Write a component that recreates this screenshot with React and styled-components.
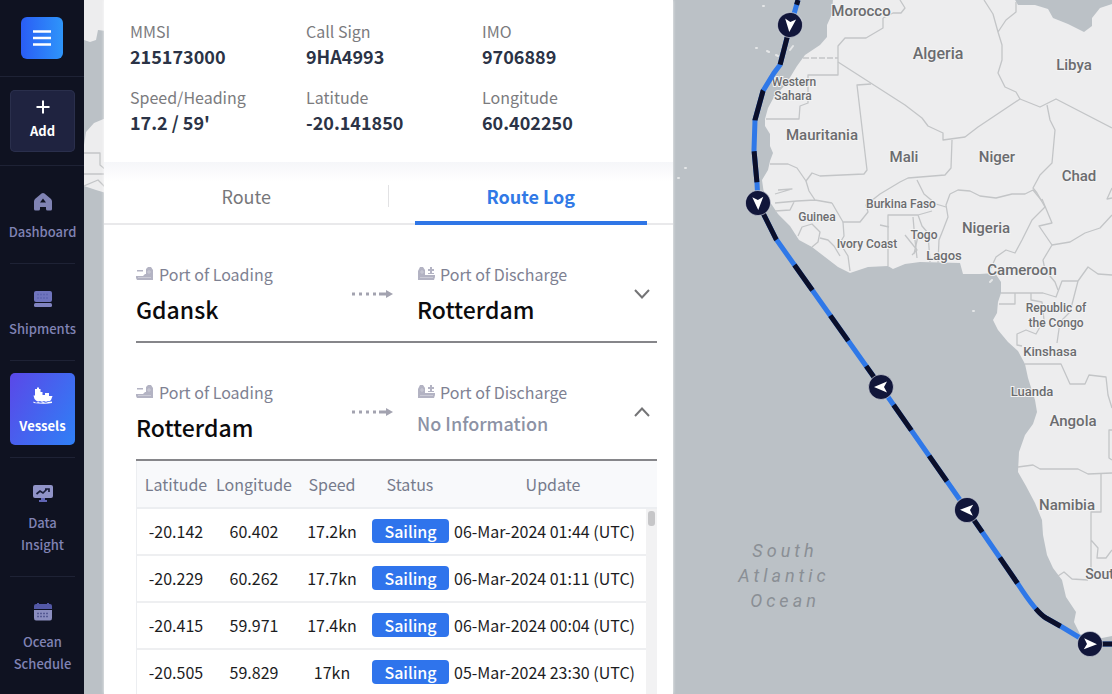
import React from 'react';
import styled, { createGlobalStyle } from 'styled-components';

const GlobalStyle = createGlobalStyle`
  *, *::before, *::after { box-sizing: border-box; }
  body {
    margin: 0;
    background: #bbc1c6;
    font-family: "Noto Sans CJK KR", "Noto Sans", sans-serif;
  }
  button { font: inherit; border: 0; cursor: pointer; }
  dl, dd, p { margin: 0; }
`;

/* ---------- shell ---------- */

const Shell = styled.div`
  display: flex;
  height: 100vh;
  overflow: hidden;
`;

const Sidebar = styled.nav`
  flex: 0 0 84px;
  background: #0f1221;
  overflow: hidden;
`;

const Stage = styled.main`
  position: relative;
  flex: 1;
  min-width: 0;
  padding-left: 20px;
`;

/* ---------- sidebar ---------- */

const SideSection = styled.div`
  display: flex;
  justify-content: center;
  padding: ${(p) => p.$pad};
  border-bottom: 1px solid #1e2235;
`;

const MenuButton = styled.button`
  display: grid;
  place-items: center;
  width: 42px;
  height: 42px;
  padding: 0;
  border-radius: 6px;
  color: #fff;
  background: linear-gradient(90deg, #2a5df5, #2e95fa);
`;

const AddButton = styled.button`
  display: flex;
  flex-direction: column;
  align-items: center;
  justify-content: center;
  gap: 6px;
  width: 100%;
  height: 62px;
  padding: 0;
  border-radius: 5px;
  color: #fff;
  background: #1f2340;
  box-shadow: inset 0 0 0 1px #2a2f4c;
  font-size: 13px;
  font-weight: 700;
  line-height: 22px;
`;

const NavList = styled.ul`
  margin: 0;
  padding: 1px 9px 0 10px;
  list-style: none;
`;

const NavItem = styled.li`
  padding: 12px 0;
  & + & { border-top: 1px solid #1e2235; }
`;

const NavLink = styled.a`
  display: flex;
  flex-direction: column;
  align-items: center;
  gap: 9px;
  padding: 13px 0 8px;
  border-radius: 5px;
  color: ${(p) => (p.$active ? '#fff' : '#8083b4')};
  background: ${(p) => (p.$active ? 'linear-gradient(120deg, #5a48e8, #2f80f6)' : 'none')};
  font-size: 13px;
  font-weight: ${(p) => (p.$active ? 700 : 500)};
  line-height: 22px;
  text-align: center;
  text-decoration: none;
`;

/* ---------- vessel panel ---------- */

const Panel = styled.section`
  position: relative;
  width: 569px;
  max-width: 100%;
  height: 100%;
  overflow: hidden;
  background: #fff;
  box-shadow: 0 0 3px rgba(255, 255, 255, 0.8);
`;

const Facts = styled.dl`
  display: grid;
  grid-template-columns: repeat(3, 1fr);
  row-gap: 16px;
  padding: 19px 15px 27px 26px;
`;

const FactLabel = styled.dt`
  color: #7b7b7e;
  font-size: 16px;
  line-height: 24px;
`;

const FactValue = styled.dd`
  color: #2b3346;
  font-size: 18px;
  font-weight: 700;
  line-height: 26px;
`;

const Tabs = styled.div`
  display: flex;
  height: 63px;
  border-bottom: 2px solid #e9e9eb;
  background: linear-gradient(#f5f6f9, #fff 20px);
`;

const Tab = styled.button`
  position: relative;
  flex: 1;
  padding: 7px 0 0;
  background: none;
  color: ${(p) => (p.$active ? '#3179e6' : '#77777a')};
  font-size: 18px;
  font-weight: ${(p) => (p.$active ? 700 : 400)};
  line-height: 28px;
  &::after {
    content: "";
    position: absolute;
    ${(p) => (p.$active
      ? 'left: 26px; right: 26px; bottom: -2px; height: 4px; background: #2f76e6;'
      : 'right: 0; top: 23px; width: 1px; height: 22px; background: #e2e2e4;')}
  }
`;

const Voyages = styled.div`
  padding: 0 16px 0 32px;
`;

const Voyage = styled.article`
  display: grid;
  grid-template-columns: 216px 65px 1fr 16px;
  padding: 36px 7px 14px 0;
  border-bottom: 2px solid #86868a;
`;

const Port = styled.div`
  display: grid;
  align-content: start;
  row-gap: 4px;
`;

const PortLabel = styled.p`
  display: flex;
  align-items: center;
  gap: 5px;
  color: #7e8192;
  font-size: 16px;
  line-height: 26px;
`;

const PortName = styled.p`
  color: ${(p) => (p.$empty ? '#8c92a5' : '#0b0b0d')};
  font-size: ${(p) => (p.$empty ? 18 : 23)}px;
  font-weight: 500;
  line-height: ${(p) => (p.$empty ? 28 : 36)}px;
`;

const Middle = styled.span`
  display: flex;
  align-items: center;
`;

const Toggle = styled.button`
  display: flex;
  align-items: center;
  padding: 0;
  background: none;
  color: #747476;
`;

const LogBox = styled.div`
  position: relative;
  border-left: 1px solid #eceef1;
`;

const Log = styled.table`
  width: 100%;
  table-layout: fixed;
  border-collapse: collapse;
  font-size: 16px;
  line-height: 24px;
`;

const Head = styled.th`
  width: ${(p) => p.$width || 'auto'};
  height: 47px;
  padding: 0;
  border-bottom: 2px solid #eceef1;
  background: #f8f9fb;
  color: #767b8c;
  font-size: 16px;
  font-weight: 400;
  text-align: center;
`;

const Cell = styled.td`
  height: 47px;
  padding: ${(p) => (p.$date ? '0 0 2px 5px' : '0 0 2px')};
  border-bottom: 2px solid #eeeff1;
  color: #1c1c1e;
  text-align: ${(p) => (p.$date ? 'left' : 'center')};
  white-space: nowrap;
`;

const Badge = styled.span`
  display: block;
  height: 24px;
  margin-left: 1px;
  border-radius: 4px;
  background: #2f74ec;
  color: #fff;
  font-size: 16px;
  font-weight: 500;
  line-height: 24px;
`;

const ScrollTrack = styled.div`
  position: absolute;
  top: 48px;
  right: 0;
  bottom: 0;
  width: 11px;
  padding: 2px 2px 0;
  background: #f2f2f3;
  &::before {
    content: "";
    display: block;
    height: 15px;
    border-radius: 3px;
    background: #c6c6c8;
  }
`;

/* ---------- map ---------- */

const MapCanvas = styled.svg`
  position: absolute;
  inset: 0;
  width: 100%;
  height: 100%;
`;

const Land = styled.path`
  fill: #ededee;
`;

const Border = styled.path`
  fill: none;
  stroke: #c3c5c7;
  stroke-width: 1.3;
  stroke-linejoin: round;
`;

const Place = styled.text`
  fill: #6b6c6f;
  stroke: #f3f3f3;
  stroke-width: 2;
  paint-order: stroke;
  font-family: Roboto, sans-serif;
  font-size: ${(p) => p.$size}px;
  font-weight: 500;
  text-anchor: middle;
`;

const SeaName = styled.text`
  fill: #8a8f95;
  font-family: Roboto, sans-serif;
  font-size: 18px;
  font-style: italic;
  letter-spacing: 4px;
  text-anchor: middle;
`;

const Track = styled.path`
  fill: none;
  stroke: ${(p) => p.$color};
  stroke-width: 5;
`;

const LEGS = [
  { d: 'M798 0 L794 14 L790 25 L787 38 L780 65 L774 73 L763 91 L755 120 L754 150 L757 183 L758 203 L776 239 L881 387', offset: 26 },
  { d: 'M881 387 L967 510 L1018 584 Q1036 612 1046 618 L1062 627 L1090 644 L1112 644', offset: 40 },
];

const STOPS = [
  [790, 25, 186],
  [758, 203, 178],
  [881, 387, 270],
  [967, 510, 272],
  [1090, 644, 92],
];

const PLACES = [
  ['Morocco', 861, 16, 15],
  ['Algeria', 938, 59, 16],
  ['Libya', 1074, 70, 15],
  ['Western', 794, 86, 12],
  ['Sahara', 793, 100, 12],
  ['Mauritania', 822, 140, 15],
  ['Mali', 904, 162, 15],
  ['Niger', 997, 162, 15],
  ['Chad', 1079, 181, 15],
  ['Burkina Faso', 901, 208, 12],
  ['Guinea', 817, 221, 12],
  ['Ivory Coast', 867, 248, 12],
  ['Togo', 924, 239, 12],
  ['Nigeria', 986, 233, 15],
  ['Lagos', 944, 260, 13],
  ['Cameroon', 1022, 275, 15],
  ['Republic of', 1056, 312, 12],
  ['the Congo', 1056, 327, 12],
  ['Kinshasa', 1050, 356, 13],
  ['Luanda', 1032, 396, 13],
  ['Angola', 1073, 426, 15],
  ['Namibia', 1067, 510, 15],
  ['South Africa', 1124, 579, 14],
];

const BORDERS = [
  'M883 18 V28 L866 38 H845 L838 46 V75 H808 V103 L800 106 L799 119 H766',
  'M900 0 L905 8 L901 13 H893 L883 18',
  'M838 62 L905 105 L922 118 L928 126 L943 133 V140 L965 137 L978 127 L1020 99 L1040 107 L1056 99 L1112 128',
  'M871 84 L857 85 L867 170 L864 174 L820 176 L812 173 L806 181 L797 168 L788 164 H770',
  'M806 181 L809 191 L815 200 L797 201 L775 203 M775 194 L792 189 L778 190 M775 211 L790 210 L794 202 M832 203 L815 200',
  'M832 203 L836 210 L843 222 L860 222 L868 212 L866 205 L880 194 L900 182 L908 178 L945 175 L951 168 L952 140',
  'M984 0 L993 14 L998 32 L1002 45 V60 L998 73 L1005 87 L1016 92 L1020 99 M998 32 L1006 20 L1016 12 V2',
  'M1047 105 L1050 120 L1055 130 L1052 163 L1040 175 L1033 188 L1037 193 L1045 207',
  'M950 194 L958 190 L970 191 L980 196 L996 198 L1012 194 L1025 194 L1033 190 L1042 201',
  'M950 194 L946 205 L948 217 L943 230 L939 240 L938 263',
  'M1045 207 L1032 220 L1022 240 L1015 253 L1006 250 L996 257 L991 268',
  'M1042 199 L1052 223 L1039 226 L1052 245 L1043 260 L1045 270 L1055 282 L1058 290',
  'M1052 245 L1070 242 L1085 233 L1100 228 L1112 215 M1112 188 L1107 199 L1112 198',
  'M917 180 L924 194 L936 204 L946 207 M843 222 L844 236 L840 243 L848 256 L850 271',
  'M798 236 L802 227 L812 224 L820 232 L818 242 L812 247 M820 238 L828 240 L834 246 L840 256',
  'M888 266 V215 H918 L922 226 L928 233 L930 262 M880 225 L889 227 M918 215 L932 211 M913 217 L915 240 L917 258',
  'M905 235 L917 250 L912 255 M918 236 L914 254',
  'M1001 293 H1043 L1056 297 L1062 281 H1078 L1088 267 L1098 274 L1112 275 M1078 281 L1070 312 L1060 322 L1057 343',
  'M1015 293 V304 H999 M1031 293 V300 L1042 302 L1044 320 L1036 334 L1026 330 L1017 334 V345 L1022 346',
  'M1025 364 H1061 L1070 384 H1085 L1089 375 L1106 377 L1108 395 L1112 408 M1112 430 H1109 V458 L1112 460',
  'M1018 467 L1033 465 L1040 469 H1078 L1088 474 L1112 473',
  'M1101 474 V512 H1091 V575 M1091 540 L1098 548 L1097 558 H1106 L1112 550',
  'M1058 576 L1064 572 L1072 579 L1088 580',
];

const COAST = 'M833 -2 L832 14 L827 25 V37 L820 45 L805 55 L797 66 L786 84 L774 97 L768 108 L765 119 L765 126 L770 134 L770 146 L773 153 L770 161 L768 170 L762 180 L764 194 L772 205 L778 214 L790 226 L799 240 L812 247 L825 257 L838 267 L850 273 L868 267 L888 266 L893 269 L905 264 L920 262 L960 263 L963 274 L980 274 L995 273 L1001 282 L1001 293 L998 302 L997 313 L993 320 L998 330 L1008 342 L1018 351 L1025 364 L1028 378 L1035 400 L1037 412 L1033 424 L1025 435 L1019 452 L1018 472 L1026 486 L1035 503 L1042 520 L1043 535 L1047 555 L1053 568 L1062 580 L1066 597 L1076 612 L1074 622 L1080 634 L1092 640 L1112 636 V4 L1100 8 L1092 18 V26 L1084 32 L1068 24 L1053 18 L1048 9 L1035 5 L1018 5 L1014 -2 Z';

function MapView() {
  return (
    <MapCanvas viewBox="84 0 1028 694" preserveAspectRatio="xMinYMin slice" role="img" aria-label="Vessel route map">
      <Land d="M84 -2 H106 V31 L98 30 L96 40 L90 42 L84 40 Z M106 118 V193 L96 190 L84 186 V145 L86 132 L94 123 Z" />
      <Border d="M84 153 H100 V165 L106 170 M84 174 L106 174 M84 186 L98 180 L106 188" />
      <Land d={COAST} />
      <path
        d="M767 51 l2 1 M756 48 l1 0 M776 55 l2 1 M790 50 l3 -4 M763 6 l1 0 M678 178 l1 0 M685 168 l1 0 M973 311 l1 0 M990 282 l2 -2"
        stroke="#e4e6e7"
        strokeWidth="2"
        strokeLinecap="round"
      />
      {BORDERS.map((d) => <Border key={d} d={d} />)}
      <Border d="M803 58 H838" strokeDasharray="6 2" />
      {PLACES.map(([name, x, y, size]) => (
        <Place key={name} x={x} y={y} $size={size}>{name}</Place>
      ))}
      <SeaName x="785" y="557">South</SeaName>
      <SeaName x="784" y="582">Atlantic</SeaName>
      <SeaName x="785" y="607">Ocean</SeaName>
      {LEGS.map(({ d, offset }) => (
        <g key={d}>
          <Track d={d} $color="#2f78e8" />
          <Track d={d} $color="#0b0f2a" strokeDasharray="31 31" strokeDashoffset={offset} />
        </g>
      ))}
      {STOPS.map(([x, y, turn]) => (
        <g key={`${x}-${y}`} transform={`translate(${x} ${y}) rotate(${turn})`}>
          <circle r="12.5" fill="#11163a" stroke="#dfe3ea" strokeOpacity="0.6" strokeWidth="1" />
          <path d="M0 -7 L5.5 6 L0 3 L-5.5 6 Z" fill="#fff" />
        </g>
      ))}
    </MapCanvas>
  );
}

/* ---------- icons ---------- */

const HomeIcon = () => (
  <svg width="20" height="20" viewBox="0 0 20 20" fill="currentColor" aria-hidden="true">
    <path d="M8.500 1.500 Q10 .3 11.500 1.500 L18 7 Q19 8 19 9.500 V17 Q19 18.500 17.500 18.500 H14.500 Q13 18.500 13 17 V15 H7 V17 Q7 18.500 5.500 18.500 H2.500 Q1 18.500 1 17 V9.500 Q1 8 2 7 Z M10 6.500 L7 10.500 H13 Z" fillRule="evenodd" />
  </svg>
);

const ContainerIcon = () => (
  <svg width="20" height="20" viewBox="0 0 20 20" aria-hidden="true">
    <rect x="1" y="2" width="18" height="11" rx="2" fill="#6f74bd" />
    <path d="M4 5.500 H16 M4 9 H16" stroke="#5e64b0" strokeWidth="1.500" strokeDasharray="2 1" />
    <rect x="1" y="14" width="18" height="4" rx="1.500" fill="#8083c0" />
  </svg>
);

const VesselIcon = () => (
  <svg width="20" height="20" viewBox="0 0 20 20" fill="currentColor" aria-hidden="true">
    <path d="M2 3 H4 V1.500 H6 V3 H7.500 V6 H9.500 V9 H12 V7 H16 V10 H19.500 L18 14 Q17 15.500 15 15 Q13 16.500 11 15 Q9 16.500 7 15 Q5 16 3 14.500 Q1 13 0.500 9.500 H2 Z M0.500 15.500 Q3 17.500 5 16 Q8 17.500 10 16 Q13 17.500 15 16 L19 15.500 L19 17 Q12 18.500 0.500 17 Z" />
  </svg>
);

const InsightIcon = () => (
  <svg width="20" height="20" viewBox="0 0 20 20" aria-hidden="true">
    <rect x="0" y="2" width="20" height="13" rx="2" fill="#9093c8" />
    <path d="M3.500 11 L7 8 L10 10 L14 6 M12 6 H16 V9" fill="none" stroke="#1a1e3a" strokeWidth="1.700" />
    <path d="M8 15 H12 V17 H14 V19 H6 V17 H8 Z" fill="#6065b4" />
  </svg>
);

const CalendarIcon = () => (
  <svg width="20" height="20" viewBox="0 0 20 20" aria-hidden="true">
    <path d="M1 7 V4 Q1 2 3 2 H4 V1 H6 V2 H14 V1 H16 V2 H17 Q19 2 19 4 V7 Z" fill="#5358a6" />
    <path d="M1 8 H19 V16 Q19 18.500 17 18.500 H3 Q1 18.500 1 16 Z" fill="#8b8ec0" />
    <path d="M4 11.500 H16 M4 14.500 H16" stroke="#555a94" strokeWidth="1.600" strokeDasharray="2 1" />
  </svg>
);

const LoadingIcon = () => (
  <svg width="18" height="18" viewBox="0 0 18 18" fill="#b3b3c3" aria-hidden="true">
    <path d="M1 5 H7 V6.500 H1 Z M0 11 H7 L9 9 H10 V4 L12 2 H15 L17 5 V15 H1 L0 13 Z" />
    <path d="M12 6 H14 V8 H12 Z M2 12.500 H15" stroke="#cbcbd6" strokeWidth="1" fill="none" />
  </svg>
);

const DischargeIcon = () => (
  <svg width="18" height="18" viewBox="0 0 18 18" fill="#b3b3c3" aria-hidden="true">
    <path d="M1 6 L3 2 H6 L8 5 V10 H18 V12 L17 15 H1 Z M13 2 H15 V4 H17 V6 H15 V8 H17 V9 H11 V8 H13 V6 H11 V4 H13 Z" />
    <path d="M4 6 H6 V8 H4 Z M3 12.500 H16" stroke="#cbcbd6" strokeWidth="1" fill="none" />
  </svg>
);

const DottedArrow = () => (
  <svg width="41" height="10" viewBox="0 0 41 10" aria-hidden="true">
    <path d="M0 5 H25" stroke="#a3a3b0" strokeWidth="3" strokeDasharray="3 4" />
    <path d="M27 5 H36" stroke="#a3a3b0" strokeWidth="3" />
    <path d="M34 1 L41 5 L34 9 Z" fill="#a3a3b0" />
  </svg>
);

const Chevron = ({ up }) => (
  <svg width="16" height="10" viewBox="0 0 16 10" fill="none" stroke="currentColor" strokeWidth="2" aria-hidden="true">
    <path d={up ? 'M1 9 L8 1.500 L15 9' : 'M1 1 L8 8.500 L15 1'} />
  </svg>
);

/* ---------- content ---------- */

const NAV = [
  { lines: ['Dashboard'], Icon: HomeIcon },
  { lines: ['Shipments'], Icon: ContainerIcon },
  { lines: ['Vessels'], Icon: VesselIcon, active: true },
  { lines: ['Data', 'Insight'], Icon: InsightIcon },
  { lines: ['Ocean', 'Schedule'], Icon: CalendarIcon },
];

const FACTS = [
  ['MMSI', '215173000'],
  ['Call Sign', '9HA4993'],
  ['IMO', '9706889'],
  ['Speed/Heading', "17.2 / 59'"],
  ['Latitude', '-20.141850'],
  ['Longitude', '60.402250'],
];

const LOG = [
  ['-20.142', '60.402', '17.2kn', '06-Mar-2024 01:44 (UTC)'],
  ['-20.229', '60.262', '17.7kn', '06-Mar-2024 01:11 (UTC)'],
  ['-20.415', '59.971', '17.4kn', '06-Mar-2024 00:04 (UTC)'],
  ['-20.505', '59.829', '17kn', '05-Mar-2024 23:30 (UTC)'],
];

function VoyageCard({ from, to, open }) {
  return (
    <Voyage>
      <Port>
        <PortLabel><LoadingIcon />Port of Loading</PortLabel>
        <PortName>{from}</PortName>
      </Port>
      <Middle><DottedArrow /></Middle>
      <Port>
        <PortLabel><DischargeIcon />Port of Discharge</PortLabel>
        <PortName $empty={!to}>{to || 'No Information'}</PortName>
      </Port>
      <Toggle type="button" aria-expanded={!!open} aria-label="Toggle voyage log"><Chevron up={open} /></Toggle>
    </Voyage>
  );
}

export default function App() {
  return (
    <>
      <GlobalStyle />
      <Shell>
        <Sidebar>
          <SideSection $pad="17px 0">
            <MenuButton type="button" aria-label="Menu">
              <svg width="20" height="18" viewBox="0 0 20 18" stroke="currentColor" strokeWidth="2.500" aria-hidden="true">
                <path d="M1 2.500 H19 M1 9 H19 M1 15.500 H19" />
              </svg>
            </MenuButton>
          </SideSection>
          <SideSection $pad="13px 9px 13px 10px">
            <AddButton type="button">
              <svg width="14" height="14" viewBox="0 0 14 14" stroke="currentColor" strokeWidth="2" aria-hidden="true">
                <path d="M7 0.500 V13.500 M0.500 7 H13.500" />
              </svg>
              Add
            </AddButton>
          </SideSection>
          <NavList>
            {NAV.map(({ lines, Icon, active }) => (
              <NavItem key={lines[0]}>
                <NavLink href="#" $active={active}>
                  <Icon />
                  <span>{lines.map((line, i) => <React.Fragment key={line}>{i > 0 && <br />}{line}</React.Fragment>)}</span>
                </NavLink>
              </NavItem>
            ))}
          </NavList>
        </Sidebar>
        <Stage>
          <MapView />
          <Panel>
            <Facts>
              {FACTS.map(([label, value]) => (
                <div key={label}>
                  <FactLabel>{label}</FactLabel>
                  <FactValue>{value}</FactValue>
                </div>
              ))}
            </Facts>
            <Tabs role="tablist">
              <Tab type="button" role="tab" aria-selected="false">Route</Tab>
              <Tab type="button" role="tab" aria-selected="true" $active>Route Log</Tab>
            </Tabs>
            <Voyages>
              <VoyageCard from="Gdansk" to="Rotterdam" />
              <VoyageCard from="Rotterdam" open />
              <LogBox>
                <Log>
                  <thead>
                    <tr>
                      <Head $width="15%">Latitude</Head>
                      <Head $width="15%">Longitude</Head>
                      <Head $width="15%">Speed</Head>
                      <Head $width="15%">Status</Head>
                      <Head>Update</Head>
                    </tr>
                  </thead>
                  <tbody>
                    {LOG.map(([lat, lon, speed, time]) => (
                      <tr key={time}>
                        <Cell>{lat}</Cell>
                        <Cell>{lon}</Cell>
                        <Cell>{speed}</Cell>
                        <Cell><Badge>Sailing</Badge></Cell>
                        <Cell $date>{time}</Cell>
                      </tr>
                    ))}
                  </tbody>
                </Log>
                <ScrollTrack />
              </LogBox>
            </Voyages>
          </Panel>
        </Stage>
      </Shell>
    </>
  );
}
